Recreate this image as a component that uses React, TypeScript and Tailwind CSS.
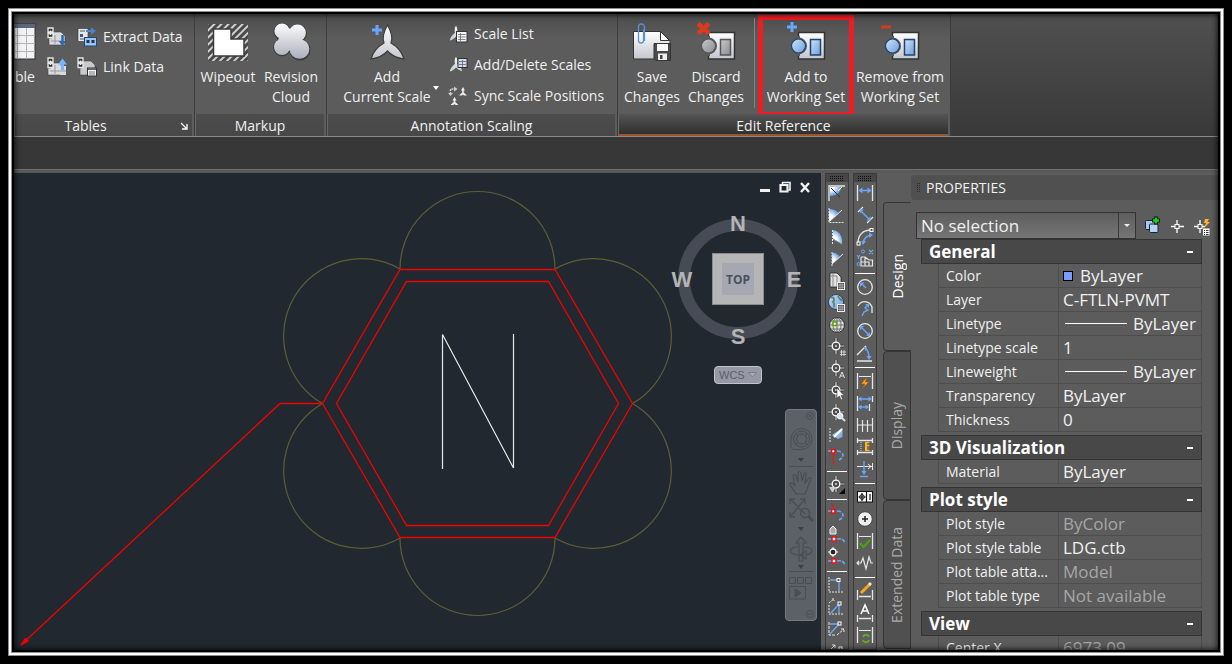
import React, { ReactNode, SVGProps } from 'react'
import clsx from 'clsx'

const BLUE = '#6aa5f8'
const LIGHT = '#e6e6e6'

interface IIcon extends SVGProps<SVGSVGElement> {
  size?: number
}

const Icon = ({ size = 20, children, ...props }: IIcon) => (
  <svg width={size} height={size} viewBox={`0 0 ${size} ${size}`} fill="none" className="shrink-0" aria-hidden {...props}>
    {children}
  </svg>
)

/* ---------- ribbon icons ---------- */

const Gradients = () => (
  <svg width="0" height="0" className="absolute" aria-hidden>
    <defs>
      <linearGradient id="silver" x1="0" y1="0" x2="0" y2="1">
        <stop offset="0" stopColor="#ffffff" />
        <stop offset="1" stopColor="#c3c6ce" />
      </linearGradient>
      <linearGradient id="cloud" gradientUnits="userSpaceOnUse" x1="0" y1="0" x2="0" y2="38">
        <stop offset="0" stopColor="#ffffff" />
        <stop offset="1" stopColor="#a9adb9" />
      </linearGradient>
      <linearGradient id="sky" x1="0" y1="0" x2="1" y2="1">
        <stop offset="0" stopColor="#cfe3fa" />
        <stop offset="1" stopColor="#6c9fdc" />
      </linearGradient>
      <linearGradient id="steel" x1="0" y1="0" x2="1" y2="1">
        <stop offset="0" stopColor="#c9c9cb" />
        <stop offset="1" stopColor="#8b8c90" />
      </linearGradient>
      <radialGradient id="sectorTop" cx="0" cy="0" r="1">
        <stop offset="0.4" stopColor="#ffffff" />
        <stop offset="1" stopColor="#5d9bea" />
      </radialGradient>
      <radialGradient id="sectorBottom" cx="0" cy="1" r="1.100">
        <stop offset="0.5" stopColor="#ffffff" />
        <stop offset="1" stopColor="#5d9bea" />
      </radialGradient>
      <pattern id="hatch" width="5" height="5" patternUnits="userSpaceOnUse" patternTransform="rotate(45)">
        <rect width="5" height="5" fill="#4a4a4a" />
        <rect width="2" height="5" fill="#d0d0d0" />
      </pattern>
    </defs>
  </svg>
)

const WipeoutIcon = () => (
  <Icon size={40}>
    <rect x="0" y="2" width="40" height="37" fill="url(#hatch)" />
    <path d="M5.500 7H23V17H36V34H5.500Z" fill="#fff" stroke="#3a3a3a" strokeWidth="1.500" />
  </Icon>
)

const CloudIcon = () => (
  <Icon size={40}>
    <g fill="#3c3c3c">
      <circle cx="11" cy="9.500" r="8.500" />
      <circle cx="27" cy="11.500" r="9" />
      <circle cx="11" cy="25.500" r="8.800" />
      <circle cx="29" cy="28" r="10.500" />
      <circle cx="18" cy="18" r="12" />
    </g>
    <g fill="url(#cloud)">
      <circle cx="11" cy="9" r="7.600" />
      <circle cx="26.500" cy="11" r="8.400" />
      <circle cx="11" cy="25" r="8" />
      <circle cx="28.500" cy="27" r="9.800" />
      <circle cx="18.500" cy="17.500" r="11" />
    </g>
  </Icon>
)

const AddScaleIcon = () => (
  <Icon size={40}>
    <path d="M20.500 3C25 11 26 16 24 21C31 25 35 30 37 37C29 36 24 33 20.500 29C17 33 12 36 4 37C6 30 10 25 17 21C15 16 16 11 20.500 3Z" fill="url(#silver)" stroke="#3c3c3c" strokeWidth="1.200" />
    <path d="M10 3V13M5 8H15" stroke={BLUE} strokeWidth="3" />
  </Icon>
)

const SaveIcon = () => (
  <Icon size={40}>
    <path d="M1.500 9.500H28L38 18.500V37H1.500Z" fill="url(#silver)" stroke="#333" />
    <path d="M28.500 9.500V18.500H37.500Z" fill="#fff" stroke="#333" />
    <path d="M22 21.500H38.500V38.500H24L22 36.500Z" fill="#4a4a4a" stroke="#333" />
    <rect x="25" y="22" width="11" height="7" fill="#fff" />
    <rect x="26" y="31.500" width="9" height="6.500" fill="#eee" />
    <rect x="28" y="33" width="2.500" height="4" fill="#444" />
    <path d="M11.500 7V18.500a2.500 2.500 0 0 1-5 0V5a3 3 0 0 1 6 0V19" stroke="#5b8fd6" strokeWidth="1.300" />
  </Icon>
)

interface IRefIcon {
  mark: 'add' | 'remove' | 'discard'
}

const ReferenceIcon = ({ mark }: IRefIcon) => {
  const fill = mark === 'discard' ? 'url(#steel)' : 'url(#sky)'
  const edge = mark === 'discard' ? '#555' : '#20426e'
  return (
    <Icon size={40}>
      <rect x="12.500" y="10.500" width="26" height="26.500" fill="url(#silver)" stroke="#333" strokeWidth="1.500" />
      <path d="M12 14V34" stroke="#5a5a5a" strokeWidth="4" />
      <circle cx="12.500" cy="24" r="8.500" fill="#5a5a5a" />
      <circle cx="12.500" cy="24" r="7" fill={fill} stroke={edge} strokeWidth="1.200" />
      <rect x="24.500" y="17.500" width="10" height="15.500" fill={fill} stroke={edge} strokeWidth="1.500" />
      {mark === 'add' && <path d="M6 0V10M1 5H11" stroke={BLUE} strokeWidth="3" />}
      {mark === 'remove' && <path d="M1 5H11" stroke="#d63a1c" strokeWidth="3" />}
      {mark === 'discard' && <path d="M2 1.500L13 11.500M13 1.500L2 11.500" stroke="#dc3a1e" strokeWidth="4.500" />}
    </Icon>
  )
}

const GridIcon = () => (
  <svg width="22" height="40" viewBox="0 0 22 40" aria-hidden>
    <rect x="0" y="2" width="21" height="35" fill="#f2f2f2" stroke="#333" />
    <rect x="0" y="2" width="21" height="4" fill="#5a6780" />
    <path d="M0 13.500H21M0 21.500H21M0 29.500H21M3.500 6V37M12.500 6V37" stroke="#b3b3b8" />
  </svg>
)

const Chain = () => (
  <g stroke="#e8e8e8" strokeWidth="1.300">
    <path d="M1 1H6V5H1ZM1 6.500H6V10.500H1Z" fill="#333" />
    <path d="M3.500 3.500V8" />
  </g>
)

const DownloadLinkIcon = () => (
  <Icon>
    <path d="M5 5H14L18 9V18H2V11H5Z" fill="#d9dadd" stroke="#444" strokeWidth="0.600" />
    <path d="M4 14H14M8 8V17" stroke="#999" />
    <Chain />
    <path d="M15.500 8V16" stroke="#2e69b5" strokeWidth="2.500" />
    <path d="M11.500 14H19.500L15.500 19Z" fill="#2e69b5" />
  </Icon>
)

const UploadLinkIcon = () => (
  <Icon>
    <path d="M4 6H14V18H1V11H4Z" fill="#d9dadd" stroke="#444" strokeWidth="0.600" />
    <path d="M13 9H19V18H13Z" fill="#d9dadd" />
    <path d="M3 14H19M8 8V17" stroke="#999" />
    <Chain />
    <path d="M15.500 5V13" stroke="#79b4ff" strokeWidth="3" />
    <path d="M11 7.500H20L15.500 1.500Z" fill="#79b4ff" />
  </Icon>
)

const ExtractIcon = () => (
  <Icon>
    <rect x="1" y="1.500" width="10" height="13" fill="#e8e8e8" stroke="#333" strokeWidth="0.600" />
    <path d="M3 4H8M3 12H7" stroke="#555" />
    <rect x="3" y="7" width="3" height="3" fill="#2c5c9e" />
    <path d="M9 4H15" stroke="#4a86d0" strokeWidth="2" />
    <path d="M14 0.500L19 4L14 7.500Z" fill="#4a86d0" />
    <rect x="7.500" y="10.500" width="12" height="8.500" fill="#9cc6f2" stroke="#1f477a" />
    <rect x="9.500" y="13" width="3" height="3" fill="#17365f" />
    <rect x="14.500" y="13" width="3" height="3" fill="#17365f" />
  </Icon>
)

const LinkDataIcon = () => (
  <Icon>
    <path d="M5 4H14L18 8V18H3V11H5Z" fill="#c9cacd" stroke="#444" strokeWidth="0.600" />
    <Chain />
    <rect x="10.500" y="11" width="9" height="8" fill="#f4f4f4" stroke="#333" />
    <path d="M11 12H19" stroke="#666" strokeWidth="2" />
    <path d="M12 15H18M12 17H18" stroke="#777" />
  </Icon>
)

const scaleShape = 'M8 1C10 4 10 7 9.500 9C12 11 14 13 15 17C12 16 10 15 8 13C6 15 4 17 1 17C2 13 4 11 6.500 9C6 6 6 4 8 1Z'

const ScaleListIcon = () => (
  <Icon>
    <path d={scaleShape} fill="url(#silver)" stroke="#3c3c3c" strokeWidth="0.600" />
    <rect x="8.500" y="7.500" width="10.500" height="10.500" fill="#f4f4f4" stroke="#333" />
    <path d="M10 10.500H17.500M10 13H17.500M10 15.500H17.500M12.500 9V17" stroke="#667" strokeWidth="0.800" />
  </Icon>
)

const EditScalesIcon = () => (
  <Icon>
    <path d={scaleShape} fill="url(#silver)" stroke="#3c3c3c" strokeWidth="0.600" />
    <rect x="10" y="3.500" width="9" height="9" fill="#d5dcec" stroke="#333" />
    <path d="M11 6.500H18M11 9.500H18M14.500 5V12" stroke="#55657f" strokeWidth="0.800" />
  </Icon>
)

const SyncScalesIcon = () => (
  <Icon>
    <path d="M2.500 8V3H7" stroke="#ccc" strokeWidth="1.500" strokeDasharray="2 1" />
    <path d="M6 0.500L9.500 3L6 5.500ZM0 7H5L2.500 10Z" fill="#ccc" />
    <path d="M15 1L17 4.500H15.800V6.500L19 9.500H16L15 8.500L14 9.500H11L14.200 6.500V4.500H13Z" fill="#eee" />
    <path d="M6.500 11L8.500 14.500H7.300V16L10.500 19H7.500L6.500 18L5.500 19H2.500L5.700 16V14.500H4.500Z" fill="#eee" />
  </Icon>
)

/* ---------- ribbon ---------- */

interface IRibbonPanel {
  title: string
  width: string
  active?: boolean
  launcher?: boolean
  children: ReactNode
}

const RibbonPanel = ({ title, width, active, launcher, children }: IRibbonPanel) => (
  <section className={clsx('flex shrink-0 flex-col border-r border-[#3c3c3c] pr-0.5', width)}>
    <div className="flex h-[100px] items-start">{children}</div>
    <h2
      className={clsx(
        'relative h-[22px] border-l border-[#676767] bg-linear-to-b text-center text-sm leading-6',
        active ? 'border-b-2 border-b-[#9a5528] from-[#555] to-[#303030]' : 'from-[#4c4c4c] to-[#484848]',
        launcher && 'pr-9'
      )}
    >
      {title}
      {launcher && (
        <button aria-label={`${title} settings`} className="absolute right-1 top-2">
          <Icon size={8} stroke="#fff" strokeWidth="1.300">
            <path d="M1 1L6 6M7 2V7H2" />
          </Icon>
        </button>
      )}
    </h2>
  </section>
)

interface IBigButton {
  icon: ReactNode
  lines: string[]
  className?: string
}

const BigButton = ({ icon, lines, className }: IBigButton) => (
  <button className={clsx('flex shrink-0 flex-col items-center pt-2 text-sm leading-5 whitespace-nowrap', className)}>
    {icon}
    <span className="mt-[5px]">
      {lines.map((line) => (
        <span key={line} className="block">{line}</span>
      ))}
    </span>
  </button>
)

const SmallButton = ({ icon, label }: { icon: ReactNode; label: string }) => (
  <button className="flex h-5 items-center gap-1.5 text-sm whitespace-nowrap">
    {icon}
    {label}
  </button>
)

const Ribbon = () => (
  <header className="flex h-[123px] shrink-0 overflow-hidden border-b border-[#8a8a8a] bg-linear-to-b from-[#505050] to-[#393939]">
    <div className="flex bg-linear-to-b from-[#4c4c4c] via-[#5c5c5c] via-20% to-[#5c5c5c]">
      <RibbonPanel title="Tables" width="w-[181px]" launcher>
        <button className="w-[22px] overflow-hidden pt-2 text-sm leading-5">
          <GridIcon />
          <span className="mt-[5px] block">ble</span>
        </button>
        <div className="ml-[11px] mt-[13px] grid grid-cols-[20px_auto] gap-x-2.5 gap-y-2.5">
          <button aria-label="Download from source"><DownloadLinkIcon /></button>
          <SmallButton icon={<ExtractIcon />} label="Extract Data" />
          <button aria-label="Upload to source"><UploadLinkIcon /></button>
          <SmallButton icon={<LinkDataIcon />} label="Link Data" />
        </div>
      </RibbonPanel>
      <RibbonPanel title="Markup" width="w-[132px]">
        <BigButton icon={<WipeoutIcon />} lines={['Wipeout']} className="ml-px w-16" />
        <BigButton icon={<CloudIcon />} lines={['Revision', 'Cloud']} className="w-[62px]" />
      </RibbonPanel>
      <RibbonPanel title="Annotation Scaling" width="w-[291px]">
        <BigButton icon={<AddScaleIcon />} lines={['Add', 'Current Scale']} className="ml-3 w-24" />
        <svg width="6" height="4" viewBox="0 0 6 4" className="-ml-0.5 mt-[72px]" aria-hidden>
          <path d="M0 0H6L3 4Z" fill="#fff" />
        </svg>
        <div className="ml-[9px] mt-2.5 flex flex-col gap-[11px]">
          <SmallButton icon={<ScaleListIcon />} label="Scale List" />
          <SmallButton icon={<EditScalesIcon />} label="Add/Delete Scales" />
          <SmallButton icon={<SyncScalesIcon />} label="Sync Scale Positions" />
        </div>
      </RibbonPanel>
      <RibbonPanel title="Edit Reference" width="w-[333px]" active>
        <BigButton icon={<SaveIcon />} lines={['Save', 'Changes']} className="ml-0.5 w-16" />
        <BigButton icon={<ReferenceIcon mark="discard" />} lines={['Discard', 'Changes']} className="w-16" />
        <span className="ml-1.5 mr-[3px] mt-1 h-[90px] w-px bg-[#828282]" />
        <div className="relative">
          <BigButton icon={<ReferenceIcon mark="add" />} lines={['Add to', 'Working Set']} className="w-24" />
          <span className="pointer-events-none absolute inset-x-0 -bottom-2.5 top-px border-5 border-[#ee1c24]" />
        </div>
        <BigButton icon={<ReferenceIcon mark="remove" />} lines={['Remove from', 'Working Set']} className="w-[92px]" />
      </RibbonPanel>
    </div>
  </header>
)

/* ---------- drawing area ---------- */

const Drawing = () => (
  <svg width="807" height="477" viewBox="14 173 807 477" fill="none" className="shrink-0" role="img" aria-label="Drawing">
    <g stroke="#5d5e35" strokeWidth="1.200">
      <path d="M400 269A77.500 77.500 0 0 1 555 269" />
      <path d="M555 269A77 77 0 0 1 632.500 403.500" />
      <path d="M632.500 403.500A77 77 0 0 1 555 538" />
      <path d="M555 538A77.500 77.500 0 0 1 400 538" />
      <path d="M400 538A77 77 0 0 1 322.500 403.500" />
      <path d="M322.500 403.500A77 77 0 0 1 400 269" />
    </g>
    <g stroke="#f40000" strokeWidth="1.300">
      <path d="M400 269.500H555L632.500 403.500L555 537.500H400L322.500 403.500Z" />
      <path d="M406.500 281.500H548.500L618.500 403.500L548.500 525.500H406.500L336.500 403.500Z" />
      <path d="M322.500 403.500H280L21 645" />
      <path d="M21 645L28 641L25.500 638.500Z" fill="#f40000" />
    </g>
    <path d="M442.500 469V334.500L513.500 468V334" stroke="#e8e8e8" strokeWidth="1.200" />
  </svg>
)

const Compass = () => (
  <svg width="138" height="140" viewBox="0 0 138 140" className="absolute right-[15px] top-9" aria-label="View cube" role="img">
    <circle cx="70" cy="70" r="54" fill="none" stroke="#464b55" strokeWidth="12" />
    <rect x="44.500" y="44.500" width="51" height="51" fill="#b5b5b5" stroke="#8c8c8c" />
    <rect x="54" y="54" width="32" height="32" fill="#a5a8b3" />
    <g fontFamily="'Liberation Sans', sans-serif" fontWeight="bold" textAnchor="middle" fill="#b4b4b4" fontSize="22">
      <text x="70" y="22">N</text>
      <text x="70" y="135">S</text>
      <text x="14" y="78">W</text>
      <text x="126" y="78">E</text>
    </g>
    <text x="70" y="75" fontFamily="'Open Sans', sans-serif" fontWeight="bold" fontSize="12" textAnchor="middle" fill="#4a525c">TOP</text>
  </svg>
)

const NavArrow = () => (
  <svg width="6" height="4" viewBox="0 0 6 4" aria-hidden><path d="M0 0H6L3 4Z" fill="#3a4046" /></svg>
)

const NavigationBar = () => (
  <nav aria-label="Navigation" className="absolute right-1 top-[236px] flex h-[212px] w-8 flex-col items-center rounded border border-[#747a80] bg-[#5b6167]">
    <button aria-label="Close" className="mr-0.5 mt-0.5 self-end">
      <Icon size={8} stroke="#484e54"><circle cx="4" cy="4" r="3.500" /><path d="M2.500 2.500L5.500 5.500M5.500 2.500L2.500 5.500" /></Icon>
    </button>
    <button aria-label="Steering wheel" className="mt-1">
      <Icon size={28} stroke="#484e54">
        <path d="M4 23V15A10.500 10.500 0 1 1 14.500 25.500H6Z" /><circle cx="14.500" cy="15" r="8" /><circle cx="14.500" cy="15" r="5" />
        <path d="M8.500 20.500L11 18.500M20.500 20.500L18 18.500M8.500 9.500L11 11.500M20.500 9.500L18 11.500" />
      </Icon>
    </button>
    <span className="mt-1.5 h-2"><NavArrow /></span>
    <hr className="w-6 border-[#484e54]" />
    <button aria-label="Pan" className="mt-0.5">
      <Icon size={28} stroke="#484e54" strokeWidth="1.200">
        <path d="M9 25C7 21 3 17 3 15C4 13 6 14 8 17L6 7C6 5 8 5 9 7L11 13V4C11 2 13 2 14 4L15 12L17 5C18 3 20 4 19 6L18 14L22 9C24 8 25 10 23 12C21 17 20 21 18 25Z" />
      </Icon>
    </button>
    <button aria-label="Zoom">
      <Icon size={26} stroke="#484e54" strokeWidth="1.300">
        <path d="M2 2L17 17M17 2L2 20M2 7V2H7M12 2H17V7M2 15V20H7" /><circle cx="17" cy="16" r="4.500" /><path d="M20 19L25 24" strokeWidth="3" />
      </Icon>
    </button>
    <span className="mt-1 h-2"><NavArrow /></span>
    <button aria-label="Orbit">
      <Icon size={30} stroke="#484e54" strokeWidth="1.200">
        <path d="M13 26V8H10L15 2L20 8H17V26Z" /><path d="M12 12C2 12 2 19 12 20H18M18 12C28 12 28 19 20 20M20 16V24L14 20Z" />
      </Icon>
    </button>
    <span className="h-1.5"><NavArrow /></span>
    <hr className="w-6 border-[#484e54]" />
    <button aria-label="Show motion">
      <Icon size={28} stroke="#484e54">
        <path d="M2.500 5.500H8.500V11.500H2.500ZM10.500 5.500H16.500V11.500H10.500ZM18.500 5.500H24.500V11.500H18.500ZM2.500 14.500H18.500V27H2.500Z" /><path d="M8 17L14 21L8 25Z" fill="#484e54" />
      </Icon>
    </button>
    <button aria-label="Options" className="mb-0.5 mr-0.5 mt-auto self-end">
      <Icon size={8} stroke="#484e54"><circle cx="4" cy="4" r="3.500" /><path d="M2 4H6" /></Icon>
    </button>
  </nav>
)

const DrawingPane = () => (
  <main className="relative flex min-w-0 flex-1 overflow-hidden bg-[#212830]">
    <Drawing />
    <div className="absolute right-2.5 top-2 flex gap-2">
      <button aria-label="Minimize"><Icon size={12}><path d="M1 9.500H11" stroke="#f2f2f2" strokeWidth="3" /></Icon></button>
      <button aria-label="Restore">
        <Icon size={12} stroke="#f2f2f2" strokeWidth="1.600"><path d="M3.500 3V1.500H11V9H9.500" /><path d="M1.500 4H8.500V10.500H1.500Z" strokeWidth="2.200" /></Icon>
      </button>
      <button aria-label="Close drawing"><Icon size={12}><path d="M2 2L10 11M10 2L2 11" stroke="#f2f2f2" strokeWidth="2.400" /></Icon></button>
    </div>
    <Compass />
    <button className="absolute right-[59px] top-[193px] flex h-[18px] w-12 items-center justify-between rounded border border-[#c0c2cc] bg-[#9698a5] px-1 font-['Liberation_Sans',sans-serif] text-[11px] text-[#5a5e6a]">
      WCS
      <svg width="9" height="6" viewBox="0 0 9 6" aria-hidden><path d="M0.500 0.500H8.500L4.500 5Z" fill="#a9abb6" stroke="#7c7f8b" /></svg>
    </button>
    <NavigationBar />
  </main>
)

/* ---------- tool strips ---------- */

const Crosshair = () => (
  <g>
    <path d="M9 1V17M1 9H17" stroke="#222" strokeWidth="2.500" />
    <path d="M9 1V17M1 9H17" stroke={LIGHT} strokeWidth="1.200" />
    <circle cx="9" cy="9" r="3.800" fill="#4c4c4c" stroke="#fff" strokeWidth="1.300" />
    <circle cx="9" cy="9" r="1" fill="#ddd" />
  </g>
)

const Bars = () => <path d="M2.500 2V18M17.500 2V18" stroke={LIGHT} strokeWidth="1.300" />

const Curve = ({ y = 0 }: { y?: number }) => (
  <g transform={`translate(0 ${y})`}>
    <path d="M1 4H4M10 4C17 4 18 10 12 13" stroke={BLUE} strokeWidth="1.600" strokeDasharray="4 1.500" />
    <rect x="4.500" y="2.500" width="3.500" height="3.500" fill="#fff" stroke="#f01010" strokeWidth="1.500" />
  </g>
)

const Track = ({ y = 0 }: { y?: number }) => (
  <g transform={`translate(0 ${y})`}>
    <path d="M1 14H5M10 14C15 13 17 15 18 18" stroke={BLUE} strokeWidth="1.500" strokeDasharray="4 1" />
    <rect x="5" y="12" width="4" height="4" fill="#fff" stroke="#f01010" strokeWidth="1.500" />
  </g>
)

const Sheet = () => (
  <g>
    <rect x="10.500" y="11.500" width="7" height="7" fill="#444" stroke="#eee" />
    <path d="M13 12V18M15.200 12V18M11 14H17M11 16.200H17" stroke="#ccc" strokeWidth="0.700" />
  </g>
)

interface ITool {
  label: string
  art?: ReactNode
}

const separator: ITool = { label: '-' }

const viewTools: ITool[] = [
  { label: 'Angle right', art: <><path d="M3 4H14C14 9 10 13 3 13Z" fill="url(#sectorTop)" /><path d="M2 18V3H18" stroke={LIGHT} strokeWidth="1.300" /><path d="M4 5L13 14" stroke="#333" /><path d="M15 4L11 8" stroke="#fff" /></> },
  { label: 'Angle open', art: <><path d="M2 4C6 4 9 5 12 8L2 17Z" fill="url(#sectorBottom)" /><path d="M3 16L15 5" stroke={LIGHT} /><path d="M2 3V17.500H17" stroke={LIGHT} strokeDasharray="2 1" /></> },
  { label: 'Slice', art: <><path d="M6 3C12 4 16 9 15 17L6 12Z" fill="url(#sectorBottom)" /><path d="M5.500 3V17" stroke={LIGHT} strokeDasharray="2 1" /><path d="M6 12L15 17" stroke="#999" /></> },
  { label: 'Corner', art: <><path d="M5 4C8 3 11 5 13 8L5 15Z" fill="url(#sectorBottom)" /><path d="M5 3V18" stroke={LIGHT} strokeDasharray="2 1" /><path d="M5 15L16 5" stroke={LIGHT} /></> },
  { label: 'Sheet', art: <><path d="M3 2H10L14 6V16H3Z" fill="#e2e2e2" stroke="#222" strokeWidth="0.800" /><path d="M6 2V16M3 5H10V16" stroke="#8a8a8a" /><Sheet /></> },
  { label: 'Geo data', art: <><circle cx="9" cy="9" r="7.500" fill="url(#sky)" stroke="#2d4258" /><path d="M4 5C7 3 8 7 6 9C8 11 7 14 6 14M11 3C12 6 14 6 15 8" stroke="#5d8a76" strokeWidth="2" /><Sheet /></> },
  { label: 'Globe', art: <><circle cx="10" cy="10" r="7.500" fill="#ddd" stroke="#333" /><path d="M10 3V17M3 10H17M4 6H16M4 14H16" stroke="#666" strokeWidth="0.900" /><ellipse cx="10" cy="10" rx="4" ry="7" stroke="#666" strokeWidth="0.900" /><rect x="6" y="7" width="3.500" height="3.500" fill="#fff" stroke="#5ba30c" strokeWidth="1.500" /></> },
  { label: 'Point grid', art: <><Crosshair /><path d="M14.500 13V19M17 13V19M13 15H19M13 17.500H19" stroke="#ccc" strokeWidth="1" /></> },
  { label: 'Point label', art: <><Crosshair /><path d="M12.500 19L15 13L17.500 19M13.500 17H16.500" stroke="#ddd" /></> },
  { label: 'Point select', art: <><Crosshair /><path d="M10 7V17L12.500 15L14 19L15.500 18L14 14.500H17Z" fill="#fff" stroke="#333" strokeWidth="0.500" /></> },
  { label: 'Point zoom', art: <><Crosshair /><circle cx="13" cy="13" r="3" fill="#d9e6f2" stroke="#eee" /><path d="M15 15L18 18" stroke="#ddd" strokeWidth="2" /></> },
  { label: 'Plane', art: <><path d="M3 3V17" stroke={LIGHT} strokeDasharray="2 1" /><path d="M15.500 3V12L11 14L5 10Z" fill="url(#sky)" /><path d="M15 4L7 12" stroke="#fff" strokeWidth="2" /></> },
  { label: 'Arc by point', art: <><Curve /><path d="M6.200 7V18" stroke="#e01818" strokeWidth="1.200" /></> },
  separator,
  { label: 'Point filter', art: <><Crosshair /><path d="M2 12H9L6 17H5Z" fill="#ccc" /><path d="M18 13V19H12Z" fill="#0a0a0a" /></> },
  separator,
  { label: 'Arc start', art: <><Curve y={4} /><path d="M6.200 1V7" stroke="#e01818" strokeWidth="1.200" /></> },
  { label: 'Arc house', art: <><Track /><path d="M3 9V4L6 1L9 4V9Z" fill="#aaa" stroke="#eee" /></> },
  { label: 'Arc centre', art: <><Track /><circle cx="6" cy="5" r="3" fill="#222" stroke="#fff" strokeWidth="1.300" /><path d="M6 0V2M6 8V10M1 5H3M9 5H11" stroke="#fff" /></> },
  separator,
  { label: 'Offset', art: <><path d="M2 2V17H17" stroke={LIGHT} strokeDasharray="2 1" /><path d="M3 5H12V16" stroke={BLUE} strokeWidth="1.400" /><rect x="10" y="3.500" width="3" height="3" fill="#555" stroke="#fff" /></> },
  { label: 'Bearing', art: <><path d="M2 8V17H17M2 6L7 2M5 2H7V4" stroke={LIGHT} strokeDasharray="2 1" /><path d="M4 16L12 7V16" stroke={BLUE} strokeWidth="1.400" /><rect x="11" y="5" width="3" height="3" fill="#555" stroke="#fff" /></> },
  { label: 'Azimuth', art: <><path d="M2 3V16H9M10 16L17 10M14 10H17V13" stroke={LIGHT} strokeDasharray="3 1" /><path d="M3 5H12L3 15" stroke={BLUE} strokeWidth="1.400" /><rect x="11" y="3" width="3" height="3" fill="#555" stroke="#fff" /></> },
  { label: 'Deflection', art: <><path d="M2 10L8 4M5 4H8V7" stroke={LIGHT} /><rect x="12" y="6" width="3" height="3" stroke="#fff" /></> }
]

const dimensionTools: ITool[] = [
  { label: 'Linear', art: <><Bars /><path d="M4 7.500H16" stroke={BLUE} strokeWidth="1.500" /><path d="M3.500 7.500L7.500 4.500V10.500ZM16.500 7.500L12.500 4.500V10.500Z" fill={BLUE} /></> },
  { label: 'Aligned', art: <><path d="M3 7L8 2M12 18L18 12" stroke={LIGHT} strokeWidth="1.200" /><path d="M6 6L14 14" stroke={BLUE} strokeWidth="1.500" /><path d="M5 4.500H9L5 8.500ZM15.500 15.500V11.500L11.500 15.500Z" fill={BLUE} /></> },
  { label: 'Arc length', art: <><path d="M3 16C3 8 8 3 16 3" stroke={LIGHT} strokeWidth="1.300" /><path d="M8 17C8 12 12 8 17 8" stroke={BLUE} strokeWidth="1.600" /><path d="M6 14L8 18L11 14ZM14 5.500L18 8L14 11Z" fill={BLUE} /><rect x="2" y="15" width="3" height="3" fill="#555" stroke="#fff" /><rect x="15" y="1.500" width="3" height="3" fill="#555" stroke="#fff" /></> },
  { label: 'Ordinate', art: <><path d="M6 8V17H17.500V11H14L10 8H6M10 8V17M6 13H14V17" stroke={LIGHT} strokeWidth="1.200" /><path d="M14 1L18 5M18 1L14 5M2 6L3.500 8L5 6M3.500 8V10" stroke={BLUE} strokeWidth="1.200" /><circle cx="8" cy="2.500" r="1.500" stroke={BLUE} /><circle cx="3.500" cy="15" r="1.500" stroke={BLUE} /></> },
  separator,
  { label: 'Radius', art: <><circle cx="10" cy="10" r="7.300" stroke={LIGHT} strokeWidth="1.300" /><path d="M5 5.500H9.500L5 10Z" fill={BLUE} /><path d="M7 7L11 11" stroke={BLUE} strokeWidth="1.500" /></> },
  { label: 'Jogged', art: <><path d="M3 7C6 1 14 1 17 8V14" stroke={LIGHT} strokeWidth="1.300" /><path d="M7 17L9 13L13 11L10 9L13 6" stroke={BLUE} strokeWidth="1.400" /><path d="M10 5H14V9Z" fill={BLUE} /></> },
  { label: 'Diameter', art: <><circle cx="10" cy="10" r="7.300" stroke={LIGHT} strokeWidth="1.300" /><path d="M6 6L14 14" stroke={BLUE} strokeWidth="1.500" /><path d="M5 5H9L5 9ZM15 15V11L11 15Z" fill={BLUE} /></> },
  { label: 'Angular', art: <><path d="M2 18H17M2 12L11 3" stroke={LIGHT} strokeWidth="1.400" /><path d="M10 5C13 7 14 11 14 15" stroke={BLUE} strokeWidth="1.500" /><path d="M11.500 13H16.500L14 17ZM8 4H12L11 8Z" fill={BLUE} /></> },
  separator,
  { label: 'Quick dimension', art: <><Bars /><path d="M4 5.500H16" stroke={LIGHT} /><path d="M12 6L6 13H10L7 18L14 11H10.500Z" fill="#ffa51f" stroke="#a84f00" strokeWidth="0.600" /></> },
  { label: 'Baseline', art: <><path d="M2.500 3V18M17.500 3V9M14.500 11V18" stroke={LIGHT} strokeWidth="1.300" /><path d="M4 6H16M4 14H13" stroke={BLUE} strokeWidth="1.600" /><path d="M3 6L6.500 3.500V8.500ZM17 6L13.500 3.500V8.500ZM3 14L6.500 11.500V16.500ZM14 14L10.500 11.500V16.500Z" fill={BLUE} /></> },
  { label: 'Continue', art: <path d="M2.500 3V17M7.500 5V17M12.500 5V17M17.500 3V17M3 10H17" stroke={LIGHT} strokeWidth="1.200" /> },
  { label: 'Spacing', art: <><path d="M2.500 1V6M17.500 1V6M2.500 13V18M17.500 13V18M3 3.500H17M3 15.500H17" stroke={LIGHT} strokeWidth="1.300" /><rect x="10" y="5" width="4.500" height="9" fill="#ffb428" /><path d="M12 7H15M12 10H15M12 12H15" stroke="#333" /><path d="M6 5V14" stroke="#ddd" strokeDasharray="1 1" /></> },
  { label: 'Break', art: <><path d="M2 7.500H17M17.500 4V11M13 5L16 7.500L13 10" stroke={LIGHT} /><path d="M9 2V14M5 17.500H13" stroke={BLUE} strokeWidth="1.400" /><path d="M6.500 12H11.500L9 16Z" fill={BLUE} /></> },
  separator,
  { label: 'Tolerance', art: <><rect x="2.500" y="4.500" width="15" height="10.500" fill="#fff" stroke="#111" /><circle cx="7" cy="10" r="2.300" stroke="#111" /><path d="M7 6V14M3.500 10H10.500M11.500 5V15M15 7V13" stroke="#111" strokeWidth="1.200" /></> },
  { label: 'Center mark', art: <><circle cx="10" cy="10" r="7.300" fill="#eee" stroke="#444" /><path d="M10 7V13M7 10H13" stroke="#222" strokeWidth="1.500" /></> },
  { label: 'Inspect', art: <><Bars /><path d="M4 5.500H16" stroke={LIGHT} /><path d="M5 12L8.500 16L15 9" stroke="#4f9c10" strokeWidth="2.500" /></> },
  { label: 'Jog line', art: <path d="M2 10H6L8 5L11 16L14 4L16 10H18M4 8L2 10L4 12" stroke={LIGHT} strokeWidth="1.200" /> },
  separator,
  { label: 'Edit dimension', art: <><path d="M2.500 9V19M17.500 9V19M4 15.500H16" stroke={LIGHT} strokeWidth="1.300" /><path d="M6 12L15 3" stroke="#f5a623" strokeWidth="3" /><path d="M14 4L16 2" stroke="#e8e0d0" strokeWidth="3" /></> },
  { label: 'Edit text', art: <><path d="M2.500 12V19M17.500 12V19M4 15.500H16" stroke={LIGHT} strokeWidth="1.300" /><path d="M6 11L10 2L14 11M7.500 8H12.500" stroke="#fff" strokeWidth="1.600" /></> },
  { label: 'Update', art: <><Bars /><path d="M4 5.500H16" stroke={LIGHT} /><path d="M8 12C9 9 13 9 14 12M14 15C13 18 9 18 8 15" stroke="#5fae1a" strokeWidth="1.800" /></> },
  separator
]

const ToolStrip = ({ label, tools }: { label: string; tools: ITool[] }) => (
  <div role="toolbar" aria-label={label} className="flex w-6 shrink-0 flex-col items-center overflow-hidden border border-[#3b3b3b] bg-[#5d5d5d]">
    <div className="flex h-2 w-full shrink-0 items-center justify-center bg-[#464646]">
      <svg width="14" height="5" viewBox="0 0 14 5" stroke="#101010" strokeDasharray="1 1" aria-hidden>
        <path d="M0 0.500H14M0 2.500H14M0 4.500H14" />
      </svg>
    </div>
    {tools.map((tool, index) =>
      tool.art ? (
        <button key={index} aria-label={tool.label} className="flex h-[22px] shrink-0 items-center">
          <Icon>{tool.art}</Icon>
        </button>
      ) : (
        <div key={index} className="flex h-1.5 w-5 shrink-0 items-center">
          <hr className="w-full border-t border-white" />
        </div>
      )
    )}
  </div>
)

/* ---------- properties palette ---------- */

interface IProperty {
  name: string
  value: string
  swatch?: boolean
  line?: boolean
  disabled?: boolean
}

const sections: { title: string; rows: IProperty[] }[] = [
  {
    title: 'General',
    rows: [
      { name: 'Color', value: 'ByLayer', swatch: true },
      { name: 'Layer', value: 'C-FTLN-PVMT' },
      { name: 'Linetype', value: 'ByLayer', line: true },
      { name: 'Linetype scale', value: '1' },
      { name: 'Lineweight', value: 'ByLayer', line: true },
      { name: 'Transparency', value: 'ByLayer' },
      { name: 'Thickness', value: '0' }
    ]
  },
  { title: '3D Visualization', rows: [{ name: 'Material', value: 'ByLayer' }] },
  {
    title: 'Plot style',
    rows: [
      { name: 'Plot style', value: 'ByColor', disabled: true },
      { name: 'Plot style table', value: 'LDG.ctb' },
      { name: 'Plot table atta...', value: 'Model', disabled: true },
      { name: 'Plot table type', value: 'Not available', disabled: true }
    ]
  },
  { title: 'View', rows: [{ name: 'Center X', value: '6973.09', disabled: true }] }
]

const tabs = ['Design', 'Display', 'Extended Data']

const PaletteTabs = () => (
  <div role="tablist" className="mt-[29px] flex w-7 shrink-0 flex-col">
    {tabs.map((tab, index) => (
      <button
        key={tab}
        role="tab"
        aria-selected={index === 0}
        className={clsx(
          'flex h-[149px] shrink-0 items-center justify-center rounded-l border-y border-l border-[#353535] text-sm',
          index === 0 ? 'bg-[#5c5c5c] text-white' : 'border-r bg-[#505050] text-[#a9a9a9]'
        )}
      >
        <span className="rotate-180 [writing-mode:vertical-rl]">{tab}</span>
      </button>
    ))}
  </div>
)

const PropertyTable = ({ rows }: { rows: IProperty[] }) => (
  <table className="ml-[17px] w-[264px] table-fixed border-separate border-spacing-0">
    <tbody>
      {rows.map((row) => (
        <tr key={row.name}>
          <th scope="row" className="h-6 w-[121px] border-x border-b border-[#4d4d4d] p-0 pl-[7px] text-left text-sm leading-5 font-normal whitespace-nowrap">
            {row.name}
          </th>
          <td className={clsx('h-6 border-r border-b border-[#4d4d4d] p-0 pl-1 text-[17px] leading-5', row.disabled && 'text-[#a6a6a6]')}>
            <span className="flex items-center whitespace-nowrap">
              {row.swatch && <i className="mr-[7px] size-2.5 border border-black bg-[#7b9cff]" />}
              {row.line && <i className="mr-1.5 ml-0.5 h-px w-[62px] bg-white" />}
              {row.value}
            </span>
          </td>
        </tr>
      ))}
    </tbody>
  </table>
)

const Properties = () => (
  <aside className="flex min-w-0 flex-1 flex-col overflow-hidden">
    <div className="mt-0.5 flex h-[25px] shrink-0 items-center gap-1.5 rounded-l bg-[#505050] pl-1.5 text-sm">
      <svg width="3" height="10" viewBox="0 0 3 10" stroke="#2c2c2c" strokeDasharray="1 1" aria-hidden>
        <path d="M0.500 0V10M2.500 0V10" />
      </svg>
      <h2>PROPERTIES</h2>
    </div>
    <div className="mt-3 ml-[5px] flex shrink-0 items-center">
      <div className="relative h-[27px] w-[220px]">
        <select
          aria-label="Selected object"
          className="h-full w-full appearance-none border border-[#333] bg-linear-to-b from-[#5e5e5e] to-[#757575] pl-1 text-[17px] outline-none"
        >
          <option>No selection</option>
        </select>
        <span className="pointer-events-none absolute inset-y-px right-px flex w-[17px] items-center justify-center border-l border-[#3a3a3a]">
          <svg width="6" height="3" viewBox="0 0 6 3" aria-hidden><path d="M0 0H6L3 3Z" fill="#eee" /></svg>
        </span>
      </div>
      <div className="ml-[7px] flex gap-1">
        <button aria-label="Toggle pick add">
          <Icon>
            <rect x="2.500" y="4.500" width="9" height="9" rx="1" fill="#a9c9ee" stroke="#16263a" />
            <rect x="6.500" y="8" width="8.500" height="8.500" rx="1" fill="#b9d4f2" stroke="#16263a" />
            <path d="M13 0.500V8.500M9 4.500H17" stroke="#111" strokeWidth="4" />
            <path d="M13 1.500V7.500M10 4.500H16" stroke="#18d018" strokeWidth="2.400" />
          </Icon>
        </button>
        <button aria-label="Select objects">
          <Icon><path d="M10 4V8M10 12V17M4 10.500H8M12 10.500H17" stroke="#fff" strokeWidth="1.300" /><rect x="8" y="8.500" width="4" height="4" stroke="#fff" /></Icon>
        </button>
        <button aria-label="Quick select">
          <Icon>
            <path d="M9 4V8M9 12V17M3 10.500H7M11 10.500H14" stroke="#fff" strokeWidth="1.300" />
            <rect x="7" y="8.500" width="4" height="4" stroke="#fff" />
            <path d="M14 3H18L16.500 6H19L13 12L15 7H13Z" fill="#ffb02e" />
            <rect x="12" y="12.500" width="6.500" height="7" fill="#fff" />
            <path d="M13 14.500H17.500M13 16.500H17.500M13 18.500H17.500" stroke="#333" strokeDasharray="1 1 3 0" />
          </Icon>
        </button>
      </div>
    </div>
    <div className="ml-2.5 flex flex-col gap-[3px]">
      {sections.map((section) => (
        <section key={section.title}>
          <h3>
            <button className="flex h-[25px] w-[281px] items-center justify-between border border-[#333] bg-[#484848] px-[7px] text-[17px] font-bold text-white">
              {section.title}
              <span className="mr-px h-0.5 w-1.5 bg-white" />
            </button>
          </h3>
          <PropertyTable rows={section.rows} />
        </section>
      ))}
    </div>
  </aside>
)

export default function App() {
  return (
    <div className="flex h-screen bg-black p-2 font-['Open_Sans','Noto_Sans',sans-serif] text-[#f0f0f0]">
      <Gradients />
      <div className="flex min-w-0 flex-1 border border-[#8e8e8e] bg-black p-[5px] shadow-[inset_0_0_0_2px_#fff,inset_0_0_0_3px_#8e8e8e]">
        <div className="relative flex min-w-0 flex-1 flex-col overflow-hidden bg-[#5c5c5c]">
          <Ribbon />
          <div className="h-8 shrink-0 bg-[#373737]" />
          <div className="h-1 shrink-0 border-t border-[#707070] bg-[#595959]" />
          <div className="flex min-h-0 flex-1">
            <DrawingPane />
            <div className="flex shrink-0 gap-1 px-1">
              <ToolStrip label="View" tools={viewTools} />
              <ToolStrip label="Dimension" tools={dimensionTools} />
            </div>
            <div className="ml-0.5 flex w-[335px] shrink-0">
              <PaletteTabs />
              <Properties />
            </div>
          </div>
          <div className="pointer-events-none absolute inset-0 shadow-[inset_0_0_6px_#000]" />
        </div>
      </div>
    </div>
  )
}
